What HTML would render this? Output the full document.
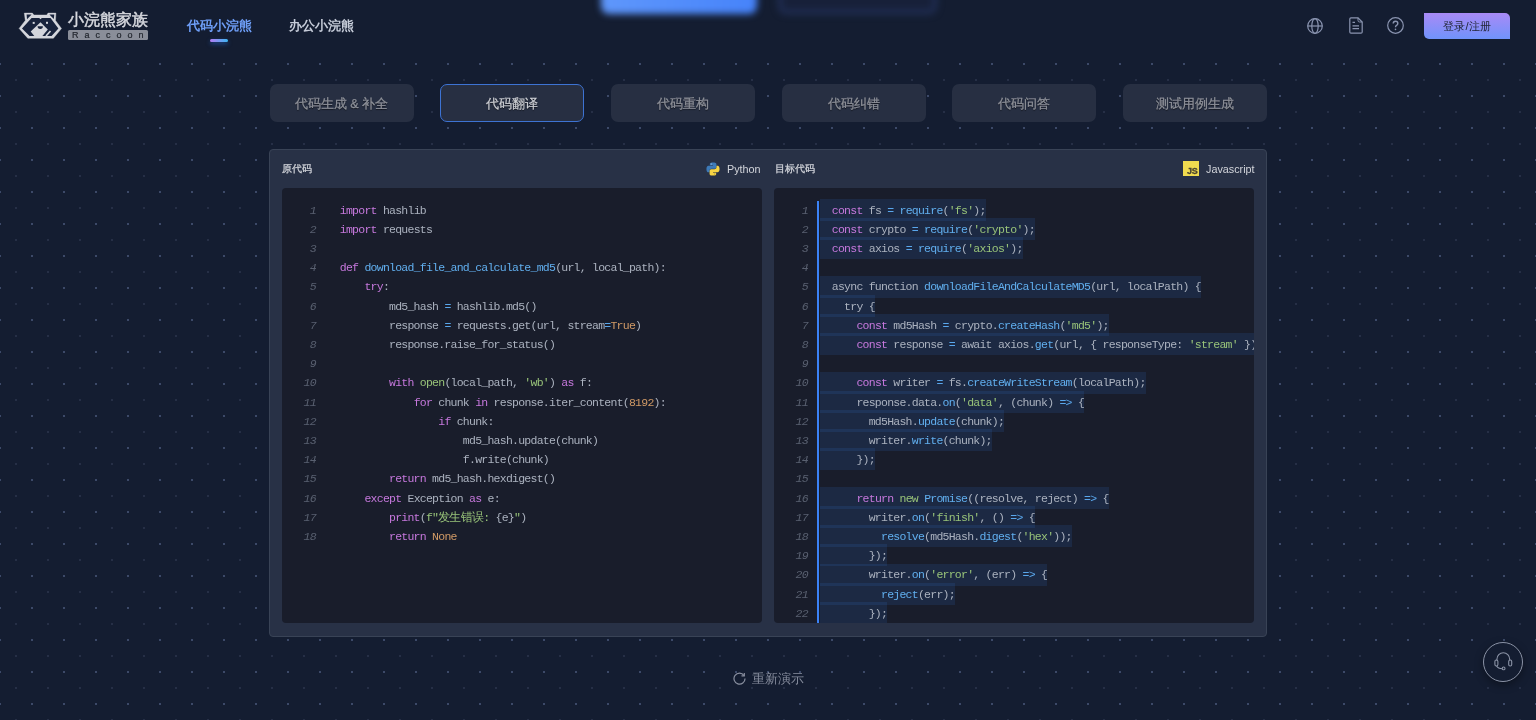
<!DOCTYPE html>
<html><head><meta charset="utf-8">
<style>
*{margin:0;padding:0;box-sizing:border-box}
html,body{width:1536px;height:720px;overflow:hidden}
body{background:#141d31;font-family:"Liberation Sans",sans-serif;position:relative}
#dots{position:absolute;left:0;top:0}
.abs{position:absolute}
/* header */
#hdr{position:absolute;left:0;top:0;width:1536px;height:56px;background:#141d31}
.blurbtn{position:absolute;filter:blur(3px);border-radius:8px}
.logo-t{position:absolute;left:68px;top:10px;font-size:16px;-webkit-text-stroke:0.5px #d6d8de;color:#d6d8de;letter-spacing:0px;white-space:nowrap;line-height:20px}
.logo-r{position:absolute;left:68px;top:29.5px;width:80px;height:10.5px;background:#8a8e99;border-radius:1.5px;color:#23272f;-webkit-text-stroke:0.2px #23272f;font-size:9px;line-height:10.5px;letter-spacing:6px;padding-left:4px;white-space:nowrap}
.nav{position:absolute;top:16px;font-size:13px;font-weight:bold;line-height:20px;white-space:nowrap}
.nav1{left:187px;color:#6e9ef7}
.nav2{left:289px;color:#c6ccd9}
.uline{position:absolute;left:210px;top:38.5px;width:17.5px;height:3.5px;border-radius:2px;background:linear-gradient(90deg,#b37cf2,#3bb6f2);box-shadow:0 2px 4px rgba(40,120,240,.5)}
.ico{position:absolute;top:17.5px}
.login{position:absolute;left:1424px;top:12.7px;width:86px;height:26px;border-radius:0 5px 0 5px;background:linear-gradient(180deg,#a98af6,#7093fb);color:#1f2433;font-size:11.3px;line-height:26px;text-align:center}
/* tabs */
.tab{position:absolute;top:84px;width:144px;height:38px;border-radius:7px;background:#272f42;color:#8f929a;-webkit-text-stroke:0.25px #8f929a;font-size:12.5px;line-height:40px;text-align:center;text-shadow:0 1px 1px rgba(0,0,0,.6)}
.tab.on{border:1px solid #3d73d3;color:#cfd1d6;-webkit-text-stroke:0.2px #cfd1d6;line-height:38px}
/* panel */
#panel{position:absolute;left:269px;top:149px;width:998px;height:488px;background:#283146;border:1px solid #394356;border-radius:4px}
.ph{position:absolute;top:11px;font-size:10.8px;color:#d3d5db;line-height:16px;white-space:nowrap}
.ph.cj{font-size:10px;top:10.5px;-webkit-text-stroke:0.25px #d3d5db}
.box{position:absolute;top:38px;width:479.5px;height:434.5px;background:#191d2b;border-radius:4px;overflow:hidden}
.lines{position:absolute;left:0;top:12.7px;right:0;bottom:0;z-index:0}
.ln{position:absolute;left:0;height:19.2px;width:100%;font-family:"Liberation Mono",monospace;font-size:11.5px;letter-spacing:-0.75px;line-height:19.2px;color:#abb2bf;white-space:pre}
.ln b{position:absolute;left:0;width:34px;text-align:right;font-weight:normal;font-style:italic;color:#596070;letter-spacing:-0.6px}
.ln p{position:absolute;left:45.5px;top:0}
.box+.box .ln p{left:45.5px}
.hl{position:relative;display:inline-block;height:19.2px;vertical-align:top}
.hl::before{content:"";position:absolute;left:0;right:0;top:-1.8px;bottom:-1px;background:rgba(59,130,246,.12);z-index:-1}
.bar{position:absolute;left:43px;top:12.7px;width:2px;bottom:0;background:#3b82f6}
i{font-style:normal}
.k{color:#c678dd}.f{color:#61afef}.s{color:#98c379}.n{color:#d19a66}.o{color:#5aa7ec}
.replay{position:absolute;left:733px;top:670px;font-size:13px;color:#8a90a0;line-height:16px;white-space:nowrap}
.help{position:absolute;left:1483px;top:641.5px;width:40px;height:40px;border-radius:50%;border:1px solid #8b93a6;background:#141d31;box-shadow:0 3px 8px rgba(0,0,0,.35)}
#root{position:absolute;left:0;top:0;width:1536px;height:720px;will-change:transform}
</style></head><body><div id="root">
<svg id="dots" width="1536" height="720">
<defs><pattern id="dp" x="0" y="0" width="32" height="32" patternUnits="userSpaceOnUse">
<rect x="-1" y="-1" width="2" height="2" fill="#3c4968"/><rect x="31" y="-1" width="2" height="2" fill="#3c4968"/><rect x="-1" y="31" width="2" height="2" fill="#3c4968"/><rect x="31" y="31" width="2" height="2" fill="#3c4968"/>
<rect x="15" y="15" width="2" height="2" fill="#262f46"/>
</pattern></defs>
<rect width="1536" height="720" fill="url(#dp)"/>
</svg>

<div id="hdr">
  <div class="blurbtn" style="left:601px;top:-20px;width:156px;height:34px;background:linear-gradient(90deg,#5f97fb,#4683fa);filter:blur(3.5px)"></div>
  <div class="blurbtn" style="left:778px;top:-20px;width:159px;height:34px;background:#172039;border:4px solid #22315a;filter:blur(3.5px)"></div>
  <svg class="abs" style="left:0;top:0" width="70" height="45" viewBox="0 0 70 45">
    <path d="M19.1 28.4 L25.3 20.5 L24.3 13.1 L32.4 13.1 L33.9 15 L46.8 15 L48 13.1 L55.9 13.1 L55.5 20.6 L61.5 28.5 L53.4 38.3 L27.8 38.3 Z" fill="#d4d6dc" stroke="#d4d6dc" stroke-width="0.4" stroke-linejoin="round"/>
    <path d="M26.6 14.6 L31.6 14.6 L27 19.3 Z M49.4 14.6 L54.3 14.6 L53.8 19 Z" fill="#18233c"/>
    <path d="M22 28.4 L31.6 18.1 L39.2 18.1 L40.5 19.2 L41.8 18.1 L50.5 18.1 L58.4 28.5 L51.6 35.9 L29.6 35.9 Z" fill="#18233c"/>
    <rect x="32.7" y="21.9" width="2" height="2" fill="#d4d6dc"/><rect x="46" y="21.8" width="2" height="2" fill="#d4d6dc"/>
    <path d="M40.5 22.3 L47.8 29.5 L42.4 36 L34.3 36 L30.7 31.5 Z" fill="#d4d6dc"/>
    <path d="M37.6 26.2 H42.9 Q42.9 28.9 40.25 28.9 Q37.6 28.9 37.6 26.2 Z" fill="#18233c"/>
    <path d="M50.5 31 L46 36" stroke="#d4d6dc" stroke-width="1.7"/>
  </svg>
  <div class="logo-t">小浣熊家族</div>
  <div class="logo-r">Raccoon</div>
  <div class="nav nav1">代码小浣熊</div>
  <div class="uline"></div>
  <div class="nav nav2">办公小浣熊</div>
  <svg class="ico" style="left:1307px" width="16" height="16" viewBox="0 0 16 16" fill="none" stroke="#8a94b0" stroke-width="1.2">
    <circle cx="8" cy="8" r="7.3"/><ellipse cx="8" cy="8" rx="3.2" ry="7.3"/><path d="M0.7 8 H15.3"/>
  </svg>
  <svg class="ico" style="left:1348.5px;top:17px" width="14" height="17" viewBox="0 0 14 17" fill="none" stroke="#8a94b0" stroke-width="1.2">
    <path d="M2 0.8 H9 L13.2 5 V15 Q13.2 16.2 12 16.2 H2 Q0.8 16.2 0.8 15 V2 Q0.8 0.8 2 0.8 Z"/><path d="M9 0.8 V3.4 Q9 5 10.6 5 H13.2" stroke-width="1"/><path d="M3.5 5.3 H6 M3.5 8.8 H10 M3.5 11.7 H10"/>
  </svg>
  <svg class="ico" style="left:1386.5px;top:17px" width="17" height="17" viewBox="0 0 17 17" fill="none" stroke="#8a94b0" stroke-width="1.2">
    <circle cx="8.5" cy="8.5" r="7.8"/>
    <path d="M6.2 6.6 Q6.2 4.3 8.5 4.3 Q10.8 4.3 10.8 6.4 Q10.8 7.8 9.5 8.4 Q8.5 8.9 8.5 10.2" stroke-width="1.4"/>
    <circle cx="8.5" cy="12.4" r="0.8" fill="#8a94b0" stroke="none"/>
  </svg>
  <div class="login">登录/注册</div>
</div>

<div class="tab" style="left:269.5px">代码生成 &amp; 补全</div>
<div class="tab on" style="left:440px">代码翻译</div>
<div class="tab" style="left:611px">代码重构</div>
<div class="tab" style="left:781.5px">代码纠错</div>
<div class="tab" style="left:952px">代码问答</div>
<div class="tab" style="left:1122.5px">测试用例生成</div>

<div id="panel">
  <div class="ph cj" style="left:12px">原代码</div>
  <svg class="abs" style="left:436px;top:12px" width="14" height="14" viewBox="0 0 16 16">
    <path d="M7.9 0.5 C4.2 0.5 4.4 2.1 4.4 2.1 V3.8 H8 V4.3 H3 C3 4.3 0.5 4 0.5 8 C0.5 11.9 2.7 11.8 2.7 11.8 H4 V10 C4 10 3.9 7.8 6.2 7.8 H9.8 C9.8 7.8 11.9 7.8 11.9 5.8 V2.4 C11.9 2.4 12.2 0.5 7.9 0.5 Z" fill="#3d7ab8"/>
    <path d="M8.1 15.5 C11.8 15.5 11.6 13.9 11.6 13.9 V12.2 H8 V11.7 H13 C13 11.7 15.5 12 15.5 8 C15.5 4.1 13.3 4.2 13.3 4.2 H12 V6 C12 6 12.1 8.2 9.8 8.2 H6.2 C6.2 8.2 4.1 8.2 4.1 10.2 V13.6 C4.1 13.6 3.8 15.5 8.1 15.5 Z" fill="#f6d443"/>
    <circle cx="6" cy="2.2" r="0.6" fill="#cfe0f0"/><circle cx="10" cy="13.8" r="0.6" fill="#8a7a30"/>
  </svg>
  <div class="ph" style="left:457px">Python</div>
  <div class="ph cj" style="left:505px">目标代码</div>
  <div class="abs" style="left:913px;top:11px;width:16px;height:15px;background:#f0db4f">
    <div class="abs" style="right:1.5px;bottom:0px;font-size:9px;font-weight:bold;color:#4a4430;-webkit-text-stroke:0.3px #4a4430;line-height:10px;letter-spacing:-0.2px">JS</div>
  </div>
  <div class="ph" style="left:936px">Javascript</div>

  <div class="box" style="left:12px">
    <div class="lines">
<div class="ln" style="top:0.0px"><b>1</b><p>  <i class="k">import</i> hashlib</p></div>
<div class="ln" style="top:19.2px"><b>2</b><p>  <i class="k">import</i> requests</p></div>
<div class="ln" style="top:38.4px"><b>3</b><p></p></div>
<div class="ln" style="top:57.6px"><b>4</b><p>  <i class="k">def</i> <i class="f">download_file_and_calculate_md5</i>(url, local_path):</p></div>
<div class="ln" style="top:76.8px"><b>5</b><p>      <i class="k">try</i>:</p></div>
<div class="ln" style="top:96.0px"><b>6</b><p>          md5_hash <i class="o">=</i> hashlib.md5()</p></div>
<div class="ln" style="top:115.2px"><b>7</b><p>          response <i class="o">=</i> requests.get(url, stream<i class="o">=</i><i class="n">True</i>)</p></div>
<div class="ln" style="top:134.4px"><b>8</b><p>          response.raise_for_status()</p></div>
<div class="ln" style="top:153.6px"><b>9</b><p></p></div>
<div class="ln" style="top:172.8px"><b>10</b><p>          <i class="k">with</i> <i class="s">open</i>(local_path, <i class="s">&#x27;wb&#x27;</i>) <i class="k">as</i> f:</p></div>
<div class="ln" style="top:192.0px"><b>11</b><p>              <i class="k">for</i> chunk <i class="k">in</i> response.iter_content(<i class="n">8192</i>):</p></div>
<div class="ln" style="top:211.2px"><b>12</b><p>                  <i class="k">if</i> chunk:</p></div>
<div class="ln" style="top:230.4px"><b>13</b><p>                      md5_hash.update(chunk)</p></div>
<div class="ln" style="top:249.6px"><b>14</b><p>                      f.write(chunk)</p></div>
<div class="ln" style="top:268.8px"><b>15</b><p>          <i class="k">return</i> md5_hash.hexdigest()</p></div>
<div class="ln" style="top:288.0px"><b>16</b><p>      <i class="k">except</i> Exception <i class="k">as</i> e:</p></div>
<div class="ln" style="top:307.2px"><b>17</b><p>          <i class="k">print</i>(<i class="s">f&quot;发生错误: </i>{e}<i class="s">&quot;</i>)</p></div>
<div class="ln" style="top:326.4px"><b>18</b><p>          <i class="k">return</i> <i class="n">None</i></p></div>
    </div>
  </div>
  <div class="box" style="left:504px">
    <div class="bar"></div>
    <div class="lines">
<div class="ln" style="top:0.0px"><b>1</b><p><span class="hl">  <i class="k">const</i> fs <i class="o">=</i> <i class="f">require</i>(<i class="s">&#x27;fs&#x27;</i>);</span></p></div>
<div class="ln" style="top:19.2px"><b>2</b><p><span class="hl">  <i class="k">const</i> crypto <i class="o">=</i> <i class="f">require</i>(<i class="s">&#x27;crypto&#x27;</i>);</span></p></div>
<div class="ln" style="top:38.4px"><b>3</b><p><span class="hl">  <i class="k">const</i> axios <i class="o">=</i> <i class="f">require</i>(<i class="s">&#x27;axios&#x27;</i>);</span></p></div>
<div class="ln" style="top:57.6px"><b>4</b><p></p></div>
<div class="ln" style="top:76.8px"><b>5</b><p><span class="hl">  async function <i class="f">downloadFileAndCalculateMD5</i>(url, localPath) {</span></p></div>
<div class="ln" style="top:96.0px"><b>6</b><p><span class="hl">    try {</span></p></div>
<div class="ln" style="top:115.2px"><b>7</b><p><span class="hl">      <i class="k">const</i> md5Hash <i class="o">=</i> crypto.<i class="f">createHash</i>(<i class="s">&#x27;md5&#x27;</i>);</span></p></div>
<div class="ln" style="top:134.4px"><b>8</b><p><span class="hl">      <i class="k">const</i> response <i class="o">=</i> await axios.<i class="f">get</i>(url, { responseType: <i class="s">&#x27;stream&#x27;</i> });</span></p></div>
<div class="ln" style="top:153.6px"><b>9</b><p></p></div>
<div class="ln" style="top:172.8px"><b>10</b><p><span class="hl">      <i class="k">const</i> writer <i class="o">=</i> fs.<i class="f">createWriteStream</i>(localPath);</span></p></div>
<div class="ln" style="top:192.0px"><b>11</b><p><span class="hl">      response.data.<i class="f">on</i>(<i class="s">&#x27;data&#x27;</i>, (chunk) <i class="o">=&gt;</i> {</span></p></div>
<div class="ln" style="top:211.2px"><b>12</b><p><span class="hl">        md5Hash.<i class="f">update</i>(chunk);</span></p></div>
<div class="ln" style="top:230.4px"><b>13</b><p><span class="hl">        writer.<i class="f">write</i>(chunk);</span></p></div>
<div class="ln" style="top:249.6px"><b>14</b><p><span class="hl">      });</span></p></div>
<div class="ln" style="top:268.8px"><b>15</b><p></p></div>
<div class="ln" style="top:288.0px"><b>16</b><p><span class="hl">      <i class="k">return</i> <i class="s">new</i> <i class="f">Promise</i>((resolve, reject) <i class="o">=&gt;</i> {</span></p></div>
<div class="ln" style="top:307.2px"><b>17</b><p><span class="hl">        writer.<i class="f">on</i>(<i class="s">&#x27;finish&#x27;</i>, () <i class="o">=&gt;</i> {</span></p></div>
<div class="ln" style="top:326.4px"><b>18</b><p><span class="hl">          <i class="f">resolve</i>(md5Hash.<i class="f">digest</i>(<i class="s">&#x27;hex&#x27;</i>));</span></p></div>
<div class="ln" style="top:345.6px"><b>19</b><p><span class="hl">        });</span></p></div>
<div class="ln" style="top:364.8px"><b>20</b><p><span class="hl">        writer.<i class="f">on</i>(<i class="s">&#x27;error&#x27;</i>, (err) <i class="o">=&gt;</i> {</span></p></div>
<div class="ln" style="top:384.0px"><b>21</b><p><span class="hl">          <i class="f">reject</i>(err);</span></p></div>
<div class="ln" style="top:403.2px"><b>22</b><p><span class="hl">        });</span></p></div>
    </div>
  </div>
</div>

<div class="replay">
  <svg class="abs" style="left:0;top:2px" width="13" height="13" viewBox="0 0 13 13" fill="none" stroke="#8a90a0" stroke-width="1.2">
    <path d="M11 3.5 A5.5 5.5 0 1 0 12 6.5"/><path d="M11.3 1 V3.8 H8.5"/>
  </svg>
  <span style="position:absolute;left:19px;top:1px">重新演示</span>
</div>

<div class="help">
  <svg class="abs" style="left:0;top:0" width="38" height="38" viewBox="0 0 38 38" fill="none" stroke="#8b93a6" stroke-width="1.1">
    <path d="M12.9 17.6 V16.2 A6.4 6.4 0 0 1 25.7 16.2 V17.6"/>
    <rect x="10.9" y="17" width="3" height="6" rx="1.4"/><rect x="24.7" y="17" width="3" height="6" rx="1.4"/>
    <path d="M12.6 23 Q14 25.6 18.2 25.7"/><circle cx="19.6" cy="25.4" r="1.4"/>
  </svg>
</div>
</div></body></html>
